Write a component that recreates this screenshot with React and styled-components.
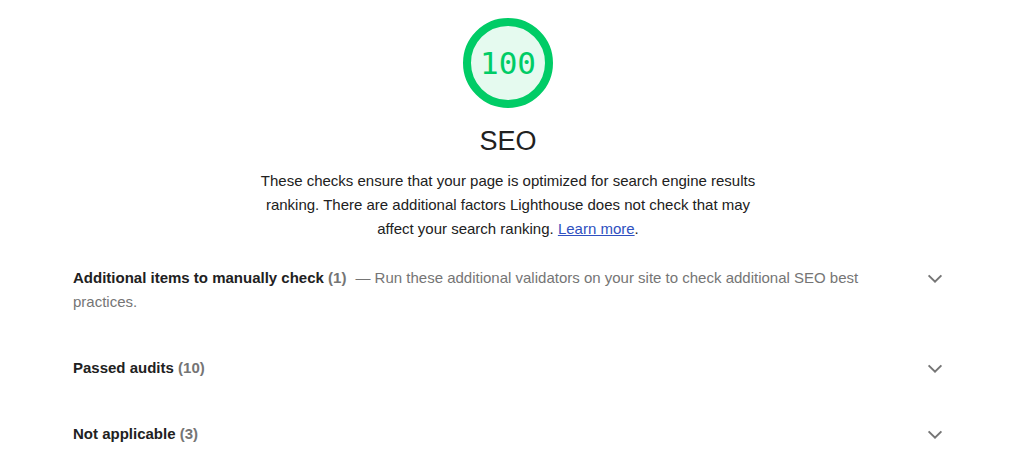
import React from 'react'
import styled, { createGlobalStyle } from 'styled-components'

const GlobalStyle = createGlobalStyle`
    html, body {
        margin: 0;
        padding: 0;
        background: #fff;
    }
    body {
        font-family: "Liberation Sans", Arial, sans-serif;
        font-size: 15px;
        line-height: 24px;
        color: #212121;
    }
`

const groups = [
    {
        title: 'Additional items to manually check',
        count: 1,
        description: 'Run these additional validators on your site to check additional SEO best practices.'
    },
    { title: 'Passed audits', count: 10 },
    { title: 'Not applicable', count: 3 }
]

const Chevron = () => (
    <ChevronIcon width="16" height="10" viewBox="0 0 16 10">
        <path d="M1.6 1.4 L8 7.6 L14.4 1.4" fill="none" stroke="#757575" strokeWidth="2" />
    </ChevronIcon>
)

const Gauge = ({ score }) => (
    <GaugeWrap>
        <svg width="90" height="90" viewBox="0 0 90 90">
            <circle cx="45" cy="45" r="41" fill="rgba(0, 204, 102, 0.1)" stroke="#0c6" strokeWidth="8" />
        </svg>
        <GaugeValue>{score}</GaugeValue>
    </GaugeWrap>
)

const App = () => {
    return (
        <>
            <GlobalStyle />
            <Category>
                <Header>
                    <Gauge score={100} />
                    <Title>SEO</Title>
                    <Description>
                        These checks ensure that your page is optimized for search engine results ranking. There are
                        additional factors Lighthouse does not check that may affect your search ranking.{' '}
                        <Link href="#">Learn more</Link>.
                    </Description>
                </Header>
                <Groups>
                    {groups.map((g) => (
                        <Group key={g.title}>
                            <Summary>
                                <GroupTitle>{g.title}</GroupTitle>{' '}
                                <Count>({g.count})</Count>
                                {g.description && <GroupDesc>— {g.description}</GroupDesc>}
                            </Summary>
                            <Chevron />
                        </Group>
                    ))}
                </Groups>
            </Category>
        </>
    )
}

export default App

const Category = styled.section`
    width: 870px;
    margin-left: 73px;
    padding-top: 18px;
`
const Header = styled.header`
    display: flex;
    flex-direction: column;
    align-items: center;
`
const GaugeWrap = styled.div`
    position: relative;
    width: 90px;
    height: 90px;

    svg {
        display: block;
    }
`
const GaugeValue = styled.div`
    position: absolute;
    inset: 0;
    display: flex;
    align-items: center;
    justify-content: center;
    font-family: "DejaVu Sans Mono", monospace;
    font-size: 31px;
    color: #0c6;
    line-height: 1;
`
const Title = styled.h2`
    margin: 17px 0 0;
    font-size: 27px;
    font-weight: normal;
    line-height: 32px;
    color: #212121;
`
const Description = styled.p`
    margin: 12px 0 0;
    max-width: 500px;
    text-align: center;
    line-height: 24px;
`
const Link = styled.a`
    color: #2f50c0;
    text-decoration: underline;
`
const Groups = styled.div`
    margin-top: 4px;
`
const Group = styled.div`
    display: flex;
    align-items: flex-start;
    justify-content: space-between;
    gap: 30px;
    padding: 21px 0;
`
const Summary = styled.div`
    flex: 1;
    line-height: 24px;
`
const GroupTitle = styled.span`
    font-weight: bold;
    color: #212121;
`
const Count = styled.span`
    font-weight: bold;
    color: #757575;
`
const GroupDesc = styled.span`
    margin-left: 9px;
    color: #757575;
`
const ChevronIcon = styled.svg`
    flex: none;
    margin-top: 8px;
`
